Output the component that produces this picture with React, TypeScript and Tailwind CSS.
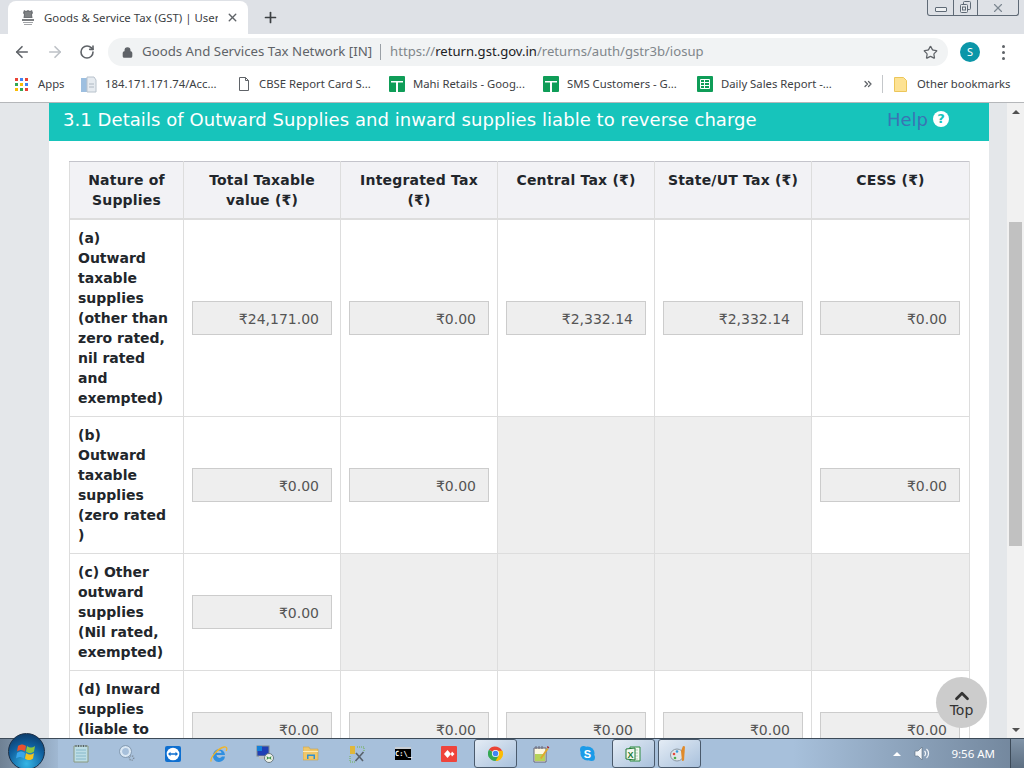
import { ArrowLeft, ArrowRight, RotateCw, Star, Lock, X, Plus, ChevronUp, ChevronsRight } from 'lucide-react';

const chrome = { fontFamily: '"Noto Sans", "Open Sans", sans-serif' };
const page = { fontFamily: '"DejaVu Sans", Verdana, sans-serif' };

type Row = { label: string[]; values: (string | null)[]; height: string };

const rows: Row[] = [
  {
    label: ['(a)', 'Outward', 'taxable', 'supplies', '(other than', 'zero rated,', 'nil rated', 'and', 'exempted)'],
    values: ['₹24,171.00', '₹0.00', '₹2,332.14', '₹2,332.14', '₹0.00'],
    height: 'h-[197px]',
  },
  {
    label: ['(b)', 'Outward', 'taxable', 'supplies', '(zero rated', ')'],
    values: ['₹0.00', '₹0.00', null, null, '₹0.00'],
    height: 'h-[137px]',
  },
  {
    label: ['(c) Other', 'outward', 'supplies', '(Nil rated,', 'exempted)'],
    values: ['₹0.00', null, null, null, null],
    height: 'h-[117px]',
  },
  {
    label: ['(d) Inward', 'supplies', '(liable to', 'reverse', 'charge)'],
    values: ['₹0.00', '₹0.00', '₹0.00', '₹0.00', '₹0.00'],
    height: 'h-[117px]',
  },
];

const headers: string[][] = [
  ['Nature of', 'Supplies'],
  ['Total Taxable', 'value (₹)'],
  ['Integrated Tax', '(₹)'],
  ['Central Tax (₹)'],
  ['State/UT Tax (₹)'],
  ['CESS (₹)'],
];

function SheetIcon({ grid }: { grid?: boolean }) {
  return (
    <svg width="16" height="16" viewBox="0 0 16 16" className="shrink-0">
      <rect width="16" height="16" rx="1" fill="#0f9d58" />
      {grid ? (
        <path d="M3.500 3.500h9v9h-9zM3.500 6.500h9M3.500 9.500h9M7.500 3.500v9" fill="none" stroke="#fff" strokeWidth="1" />
      ) : (
        <path d="M2 5h12v1.600H9V16H7V6.600H2z" fill="#fff" />
      )}
    </svg>
  );
}

function Bookmark({ icon, text, width, gap = 'gap-[8px]' }: { icon: React.ReactNode; text: string; width: string; gap?: string }) {
  return (
    <div className={`flex items-center ${gap} ${width}`}>
      {icon}
      <span className="text-[11.3px] text-[#3c4043] whitespace-nowrap">{text}</span>
    </div>
  );
}

function TaskIcon({ active, children }: { active?: boolean; children: React.ReactNode }) {
  return (
    <div
      className={
        active
          ? 'w-[43px] h-[29px] mx-[1.5px] flex items-center justify-center rounded-[3px] border border-[#4a5a6c] bg-gradient-to-br from-[#e4ecf5] to-[#a9c1dc]'
          : 'w-[46px] h-[29px] flex items-center justify-center'
      }
    >
      {children}
    </div>
  );
}

export default function App() {
  return (
    <div className="w-[1024px] h-[768px] overflow-hidden flex flex-col bg-white relative" style={chrome}>
      {/* tab strip */}
      <div className="h-[34px] shrink-0 bg-[#dee1e6] flex items-end pl-[8px] relative">
        <div className="w-[240px] h-[33px] bg-white rounded-t-[8px] flex items-center pl-[12px] pr-[9px]">
          <svg width="16" height="18" viewBox="0 0 16 18" className="shrink-0">
            <path d="M4 1l2 1 2-1 2 1 2-1 1 3-1 1.500.5 3.500H3.500L4 5.500 3 4z" fill="#6f7276" />
            <path d="M6 3v5M8 3v5M10 3v5" stroke="#a5a7aa" strokeWidth="0.6" />
            <path d="M2 10h12v2H2z" fill="#7d8083" />
            <path d="M3 13h10v1H3zM4 15h8v1H4z" fill="#a2a4a7" />
          </svg>
          <span className="ml-[8px] text-[11.4px] text-[#3c4043] w-[174px] overflow-hidden whitespace-nowrap">Goods &amp; Service Tax (GST) | User</span>
          <X size={13} strokeWidth={2.6} className="ml-auto text-[#5f6368]" />
        </div>
        <Plus size={17} strokeWidth={2.4} className="ml-[14px] mb-[8px] text-[#3c4043]" />
        <div className="ml-auto mr-[5px] self-start w-[92px] h-[16px] border border-t-0 border-[#5f6a76] rounded-b-[3px] flex text-[#5f6a76]">
          <div className="w-[26px] flex items-center justify-center border-r border-[#5f6a76]">
            <div className="w-[12px] h-[5px] border border-[#5f6a76] rounded-[1px] mt-[3px] bg-[#eef0f2]" />
          </div>
          <div className="w-[24px] flex items-center justify-center border-r border-[#5f6a76]">
            <svg width="13" height="13" viewBox="0 0 13 13" fill="none" stroke="#5f6a76">
              <rect x="4.500" y="0.500" width="7" height="8" rx="1" />
              <rect x="1.500" y="3.500" width="7" height="8" rx="1" fill="#e8eaed" />
              <rect x="3.500" y="6" width="3" height="3" />
            </svg>
          </div>
          <div className="flex-1 flex items-center justify-center">
            <X size={14} strokeWidth={2} className="text-[#7d8791]" />
          </div>
        </div>
      </div>

      {/* toolbar */}
      <div className="h-[32px] shrink-0 flex items-end">
        <div className="w-[108px] h-[28px] flex items-center pl-[13px]">
          <ArrowLeft size={18} strokeWidth={2.2} className="text-[#5f6368]" />
          <ArrowRight size={18} strokeWidth={2.2} className="ml-[15px] text-[#bdc1c6]" />
          <RotateCw size={16} strokeWidth={2.4} className="ml-[15px] text-[#5f6368]" />
        </div>
        <div className="w-[840px] h-[28px] rounded-full bg-[#f1f3f4] flex items-center pl-[14px] pr-[10px]">
          <Lock size={11} strokeWidth={3} className="text-[#5f6368] fill-[#5f6368]" />
          <span className="ml-[9px] text-[13.25px] text-[#5f6368] whitespace-nowrap">Goods And Services Tax Network [IN]</span>
          <span className="ml-[8px] mr-[9px] w-px h-[16px] bg-[#9aa0a6]" />
          <span className="text-[13.1px] whitespace-nowrap text-[#80868b]">
            https://<span className="text-[#202124]">return.gst.gov.in</span>/returns/auth/gstr3b/iosup
          </span>
          <Star size={15} strokeWidth={2} className="ml-auto text-[#5f6368]" />
        </div>
        <div className="flex-1 h-[28px] flex items-center pl-[12px]">
          <div className="w-[20px] h-[20px] rounded-full bg-[#0b96a8] text-white text-[11px] flex items-center justify-center">S</div>
          <div className="ml-[22px] flex flex-col gap-[3px]">
            <span className="w-[3px] h-[3px] rounded-full bg-[#5f6368]" />
            <span className="w-[3px] h-[3px] rounded-full bg-[#5f6368]" />
            <span className="w-[3px] h-[3px] rounded-full bg-[#5f6368]" />
          </div>
        </div>
      </div>

      {/* bookmarks */}
      <div className="h-[37px] shrink-0 border-b border-[#b5b7ba] flex items-center pl-[15px]">
        <Bookmark
          width="w-[66px]"
          text="Apps"
          gap="gap-[10px]"
          icon={
            <svg width="13" height="13" viewBox="0 0 13 13" className="shrink-0">
              <path d="M0 0h3v3H0z" fill="#ea4335" /><path d="M5 0h3v3H5z" fill="#4285f4" /><path d="M10 0h3v3h-3z" fill="#ea4335" />
              <path d="M0 5h3v3H0z" fill="#34a853" /><path d="M5 5h3v3H5z" fill="#fbbc05" /><path d="M10 5h3v3h-3z" fill="#4285f4" />
              <path d="M0 10h3v3H0z" fill="#fbbc05" /><path d="M5 10h3v3H5z" fill="#34a853" /><path d="M10 10h3v3h-3z" fill="#ea4335" />
            </svg>
          }
        />
        <Bookmark
          width="w-[155px]"
          text="184.171.171.74/Acc..."
          icon={
            <svg width="16" height="17" viewBox="0 0 16 17" className="shrink-0">
              <path d="M0 2h6v14H0z" fill="#9dbfe0" />
              <path d="M6 1h7l2 3v12H6z" fill="#e6ebf0" stroke="#b8c2cc" />
              <path d="M8 8h5M8 11h5" stroke="#aeb8c2" />
            </svg>
          }
        />
        <Bookmark
          width="w-[153px]"
          text="CBSE Report Card S..."
          gap="gap-[7px]"
          icon={
            <svg width="14" height="16" viewBox="0 0 14 16" fill="none" stroke="#5f6368" className="shrink-0 mx-px">
              <path d="M2.500 1.500h6l3 3v10h-9z" /><path d="M8.500 1.500v3h3" />
            </svg>
          }
        />
        <Bookmark width="w-[154px]" text="Mahi Retails - Goog..." icon={<SheetIcon />} />
        <Bookmark width="w-[154px]" text="SMS Customers - G..." icon={<SheetIcon />} />
        <Bookmark width="w-[165px]" text="Daily Sales Report -..." icon={<SheetIcon grid />} />
        <ChevronsRight size={12} strokeWidth={2.6} className="text-[#5f6368]" />
        <span className="ml-[8px] w-px h-[18px] bg-[#c4c7ca]" />
        <div className="ml-[11px]">
          <Bookmark
            width="w-[120px]"
            text="Other bookmarks"
            gap="gap-[10px]"
            icon={
              <svg width="13" height="15" viewBox="0 0 13 15" className="shrink-0">
                <path d="M.5.500h9l3 3v11H.500z" fill="#fde293" stroke="#ecc65a" />
              </svg>
            }
          />
        </div>
      </div>

      {/* page with scrollbar */}
      <div className="flex-1 min-h-0 flex">
        <div className="flex-1 min-w-0 bg-[#e4e7ea] pl-[49px] pr-[18px] overflow-hidden" style={page}>
          <div className="w-[940px] bg-white">
            <div className="h-[38px] bg-[#17c4bb] flex items-center pl-[14px] pr-[40px] pb-[6px]">
              <h3 className="text-[18px] tracking-[0.06px] text-white whitespace-nowrap">3.1 Details of Outward Supplies and inward supplies liable to reverse charge</h3>
              <span className="ml-auto text-[18px] text-[#3a74b4]">Help</span>
              <span className="ml-[5px] w-[16px] h-[16px] rounded-full bg-white text-[#17c4bb] text-[13px] font-bold flex items-center justify-center">?</span>
            </div>
            <div className="px-[20px] pt-[20px]">
              <table className="w-[900px] table-fixed border-collapse text-[14px] text-[#22262b]">
                <colgroup>
                  <col className="w-[114px]" />
                  <col className="w-[157px]" />
                  <col className="w-[157px]" />
                  <col className="w-[157px]" />
                  <col className="w-[157px]" />
                  <col className="w-[158px]" />
                </colgroup>
                <thead>
                  <tr className="h-[57px] bg-[#f2f2f5]">
                    {headers.map((h) => (
                      <th key={h[0]} className="align-top px-[8px] pt-[8px] font-bold tracking-[0.2px] leading-[20px] border border-[#dddddd] border-t-[#c4c4cb] border-b-2 text-center">
                        {h.map((line) => (
                          <div key={line} className="whitespace-nowrap">{line}</div>
                        ))}
                      </th>
                    ))}
                  </tr>
                </thead>
                <tbody>
                  {rows.map((r) => (
                    <tr key={r.label[0]} className={r.height}>
                      <td className="align-top p-[8px] font-bold leading-[20px] border border-[#dddddd]">
                        {r.label.map((line) => (
                          <div key={line} className="whitespace-nowrap">{line}</div>
                        ))}
                      </td>
                      {r.values.map((v, i) =>
                        v === null ? (
                          <td key={i} className="bg-[#eeeeee] border border-[#dddddd]" />
                        ) : (
                          <td key={i} className="align-middle px-[8px] border border-[#dddddd]">
                            <div className="h-[34px] w-[140px] bg-[#eeeeee] border border-[#cccccc] flex items-center justify-end pr-[12px] pt-[3px] text-[#555555]">
                              {v}
                            </div>
                          </td>
                        ),
                      )}
                    </tr>
                  ))}
                </tbody>
              </table>
            </div>
          </div>
        </div>
        <div className="w-[17px] shrink-0 bg-[#f1f1f1] flex flex-col items-center">
          <div className="h-[17px] flex items-center justify-center">
            <div className="w-0 h-0 border-x-[4px] border-x-transparent border-b-[4px] border-b-[#505050]" />
          </div>
          <div className="mt-[102px] w-[13px] h-[324px] bg-[#c1c1c1]" />
          <div className="mt-auto h-[17px] flex items-center justify-center">
            <div className="w-0 h-0 border-x-[4px] border-x-transparent border-t-[4px] border-t-[#505050]" />
          </div>
        </div>
      </div>

      {/* taskbar */}
      <div className="h-[30px] shrink-0 border-t border-[#3c4a58] bg-[#a7c0db] flex items-center relative">
        <div className="w-[58px] h-full shrink-0 bg-gradient-to-r from-[#6f8194] to-[#a0b8d2]" />
        <TaskIcon>
          <svg width="16" height="19" viewBox="0 0 16 19">
            <path d="M1 2h14v16H1z" fill="#bcdde6" stroke="#8b9a80" />
            <path d="M3 1v2M5.500 1v2M8 1v2M10.500 1v2M13 1v2" stroke="#55606a" />
            <path d="M3 6h10M3 9h10M3 12h10M3 15h10" stroke="#86b8c9" />
          </svg>
        </TaskIcon>
        <TaskIcon>
          <svg width="16" height="17" viewBox="0 0 16 17" fill="none">
            <circle cx="6.500" cy="6.500" r="4.500" stroke="#dbe8f4" strokeWidth="2.200" />
            <circle cx="6.500" cy="6.500" r="6" stroke="#7d93a8" strokeWidth="0.800" />
            <circle cx="12.500" cy="13" r="2.200" stroke="#7d8a98" strokeWidth="1.400" strokeDasharray="1 1" />
          </svg>
        </TaskIcon>
        <TaskIcon>
          <svg width="16" height="16" viewBox="0 0 16 16">
            <rect width="16" height="16" rx="2" fill="#0e6fd0" />
            <circle cx="8" cy="8" r="6.300" fill="#fff" />
            <path d="M3 8l2.500-2.200v1.400h5V5.800L13 8l-2.500 2.200V8.800h-5v1.400z" fill="#0e6fd0" />
          </svg>
        </TaskIcon>
        <TaskIcon>
          <svg width="18" height="18" viewBox="0 0 18 18" fill="none">
            <path fillRule="evenodd" d="M3 10.500a6 6 0 1 1 12-.5H6.500a3 3 0 0 0 5.500 1.500h3A6 6 0 0 1 3 10.500zM6.500 8h5a2.500 2.500 0 0 0-5 0z" fill="#2f8fe0" />
            <path d="M1.200 16.500c-1.500-3 6-13 13-14.500 3-.5 3 2 2 4" stroke="#f0b429" strokeWidth="1.300" />
          </svg>
        </TaskIcon>
        <TaskIcon>
          <svg width="18" height="18" viewBox="0 0 18 18">
            <rect x="1" y="1" width="12" height="10" fill="#1f3fb5" stroke="#7f8890" />
            <rect x="1" y="1" width="5" height="5" fill="#1480d8" />
            <rect x="3" y="11" width="8" height="3" fill="#b8bec4" />
            <circle cx="13" cy="13" r="4.500" fill="#eef2ea" stroke="#6a7880" />
            <path d="M10.800 13h4.400M11 11.500l1 1.500-1 1.500M15 11.500l-1 1.500 1 1.500" stroke="#2a8a3a" fill="none" />
          </svg>
        </TaskIcon>
        <TaskIcon>
          <svg width="16" height="15" viewBox="0 0 16 15">
            <path d="M0 1h6l1 2h8v11H0z" fill="#efc76a" stroke="#c9a24a" strokeWidth="0.600" />
            <path d="M0 5h15v1H0z" fill="#fbe9b8" />
            <path d="M4 13V8.500h8V13h-1.500v-3h-5v3z" fill="#2f8fd0" />
          </svg>
        </TaskIcon>
        <TaskIcon>
          <svg width="16" height="18" viewBox="0 0 16 18" fill="none">
            <path d="M1 1h5v8H1z" fill="#e0b73a" />
            <path d="M7 8l7 8M14.500 7l-8 9" stroke="#59626c" strokeWidth="1.600" />
            <path d="M1 11v6h6M8 2h7v5" stroke="#6fb04f" strokeDasharray="1 1" />
          </svg>
        </TaskIcon>
        <TaskIcon>
          <div className="w-[16px] h-[13px] bg-black border-t-2 border-[#c9ced4] text-white text-[7px] leading-[10px] font-bold text-center" style={{ fontFamily: '"DejaVu Sans Mono", monospace' }}>C:\_</div>
        </TaskIcon>
        <TaskIcon>
          <svg width="16" height="16" viewBox="0 0 16 16">
            <rect width="16" height="16" rx="1" fill="#ef443b" />
            <path d="M6.500 4L10 8l-3.500 4L3 8zM11 5.500L13.500 8 11 10.500 9.800 8z" fill="#fff" />
          </svg>
        </TaskIcon>
        <TaskIcon active>
          <svg width="15" height="15" viewBox="0 0 16 16">
            <path d="M8 8h7.500A8 8 0 0 0 1 4z" fill="#ea4335" />
            <path d="M8 16A8 8 0 0 0 15.500 5H8z" fill="#fbbc05" />
            <path d="M1 4a8 8 0 0 0 7 12l3.500-6z" fill="#34a853" />
            <circle cx="8" cy="8" r="3.800" fill="#fff" />
            <circle cx="8" cy="8" r="3" fill="#4285f4" />
          </svg>
        </TaskIcon>
        <TaskIcon>
          <svg width="17" height="18" viewBox="0 0 17 18">
            <path d="M1 3h12v14H1z" fill="#fdf8e0" stroke="#667" />
            <path d="M2 9h10v7H2z" fill="#b6d25a" />
            <path d="M3 1v3M6 1v3M9 1v3" stroke="#667" />
            <path d="M7 13L14 3l1.500 1L8.500 14z" fill="#e2a72b" />
            <path d="M14.500 1l1.800 1.200-.8 1.300-1.700-1.200z" fill="#a3262c" />
          </svg>
        </TaskIcon>
        <TaskIcon>
          <svg width="17" height="17" viewBox="0 0 17 17">
            <circle cx="8.500" cy="8.500" r="7" fill="#1b9be8" />
            <circle cx="4.500" cy="4.500" r="3.500" fill="#1b9be8" />
            <circle cx="12.500" cy="12.500" r="3.500" fill="#1b9be8" />
            <text x="8.500" y="12.500" textAnchor="middle" fontSize="11" fontWeight="700" fill="#fff" fontFamily="Liberation Sans, sans-serif">S</text>
          </svg>
        </TaskIcon>
        <TaskIcon active>
          <svg width="16" height="16" viewBox="0 0 16 16">
            <path d="M5 1h10v14H5z" fill="#f4f8f2" stroke="#2b8a3e" />
            <path d="M8 4h5M8 7h5M8 10h5M8 13h5" stroke="#b3cfb6" />
            <path d="M1 3l9-1v12l-9-1z" fill="#f3f7ef" stroke="#1e7a36" />
            <text x="5.500" y="11.500" textAnchor="middle" fontSize="9" fontWeight="700" fill="#1e7a36" fontFamily="Liberation Sans, sans-serif">X</text>
          </svg>
        </TaskIcon>
        <TaskIcon active>
          <svg width="18" height="17" viewBox="0 0 18 17">
            <ellipse cx="7" cy="10" rx="6.500" ry="6" fill="#dfe5ea" stroke="#8a97a3" />
            <circle cx="4" cy="9" r="1.300" fill="#e5483c" />
            <circle cx="7" cy="6.500" r="1.300" fill="#3a9bd9" />
            <circle cx="5" cy="13" r="1.300" fill="#4cad48" />
            <path d="M11 6l2-5 2 .500-1 14-2 .5z" fill="#e08a2a" />
          </svg>
        </TaskIcon>
        <div className="ml-auto flex items-center h-full pl-[100px] bg-gradient-to-r from-[#a7c0db] to-[#71859b]">
          <div className="w-0 h-0 border-x-[4px] border-x-transparent border-b-[4px] border-b-white" />
          <svg width="18" height="17" viewBox="0 0 18 17" fill="none" className="ml-[13px]">
            <path d="M1 6h3l4-4v13l-4-4H1z" fill="#f4f7fa" stroke="#5b6b7c" strokeWidth="0.600" />
            <path d="M10.500 6a3.500 3.500 0 0 1 0 5M12.500 4a6 6 0 0 1 0 9" stroke="#f4f7fa" strokeWidth="1.200" />
          </svg>
          <span className="ml-[19px] text-[11.5px] text-white whitespace-nowrap">9:56 AM</span>
          <div className="ml-[15px] w-[14px] h-full border-l border-[#3c4a58] bg-gradient-to-b from-[#8194a8] to-[#5d6f82]" />
        </div>
        {/* start orb sticks out over the taskbar edge */}
        <div className="absolute left-[8px] top-[-6px] w-[37px] h-[37px] rounded-full bg-[radial-gradient(circle_at_50%_85%,#35b6e6_0%,#0f5f9e_55%,#0c2f57_100%)] border border-[#1a2f47] flex items-center justify-center">
          <svg width="22" height="20" viewBox="0 0 22 20">
            <path d="M2 4c3-2 5-2 8 0l-1 5.500c-3-2-5-2-8 0z" fill="#e8512f" />
            <path d="M11 4c3 2 5 2 8 0l-1 5.500c-3 2-5 2-8 0z" fill="#8cc63f" />
            <path d="M1 11c3-2 5-2 8 0l-1 5.500c-3-2-5-2-8 0z" fill="#3aa5ea" />
            <path d="M10 11c3 2 5 2 8 0l-1 5.500c-3 2-5 2-8 0z" fill="#f6c21c" />
          </svg>
        </div>
      </div>

      {/* back to top button */}
      <div className="absolute left-[936px] top-[677px] w-[51px] h-[51px] rounded-full bg-[#cccccc] flex flex-col items-center justify-center text-[#333333]" style={page}>
        <ChevronUp size={22} strokeWidth={3} className="-mb-[6px] -mt-[2px]" />
        <span className="text-[14px] leading-[18px]">Top</span>
      </div>
    </div>
  );
}
